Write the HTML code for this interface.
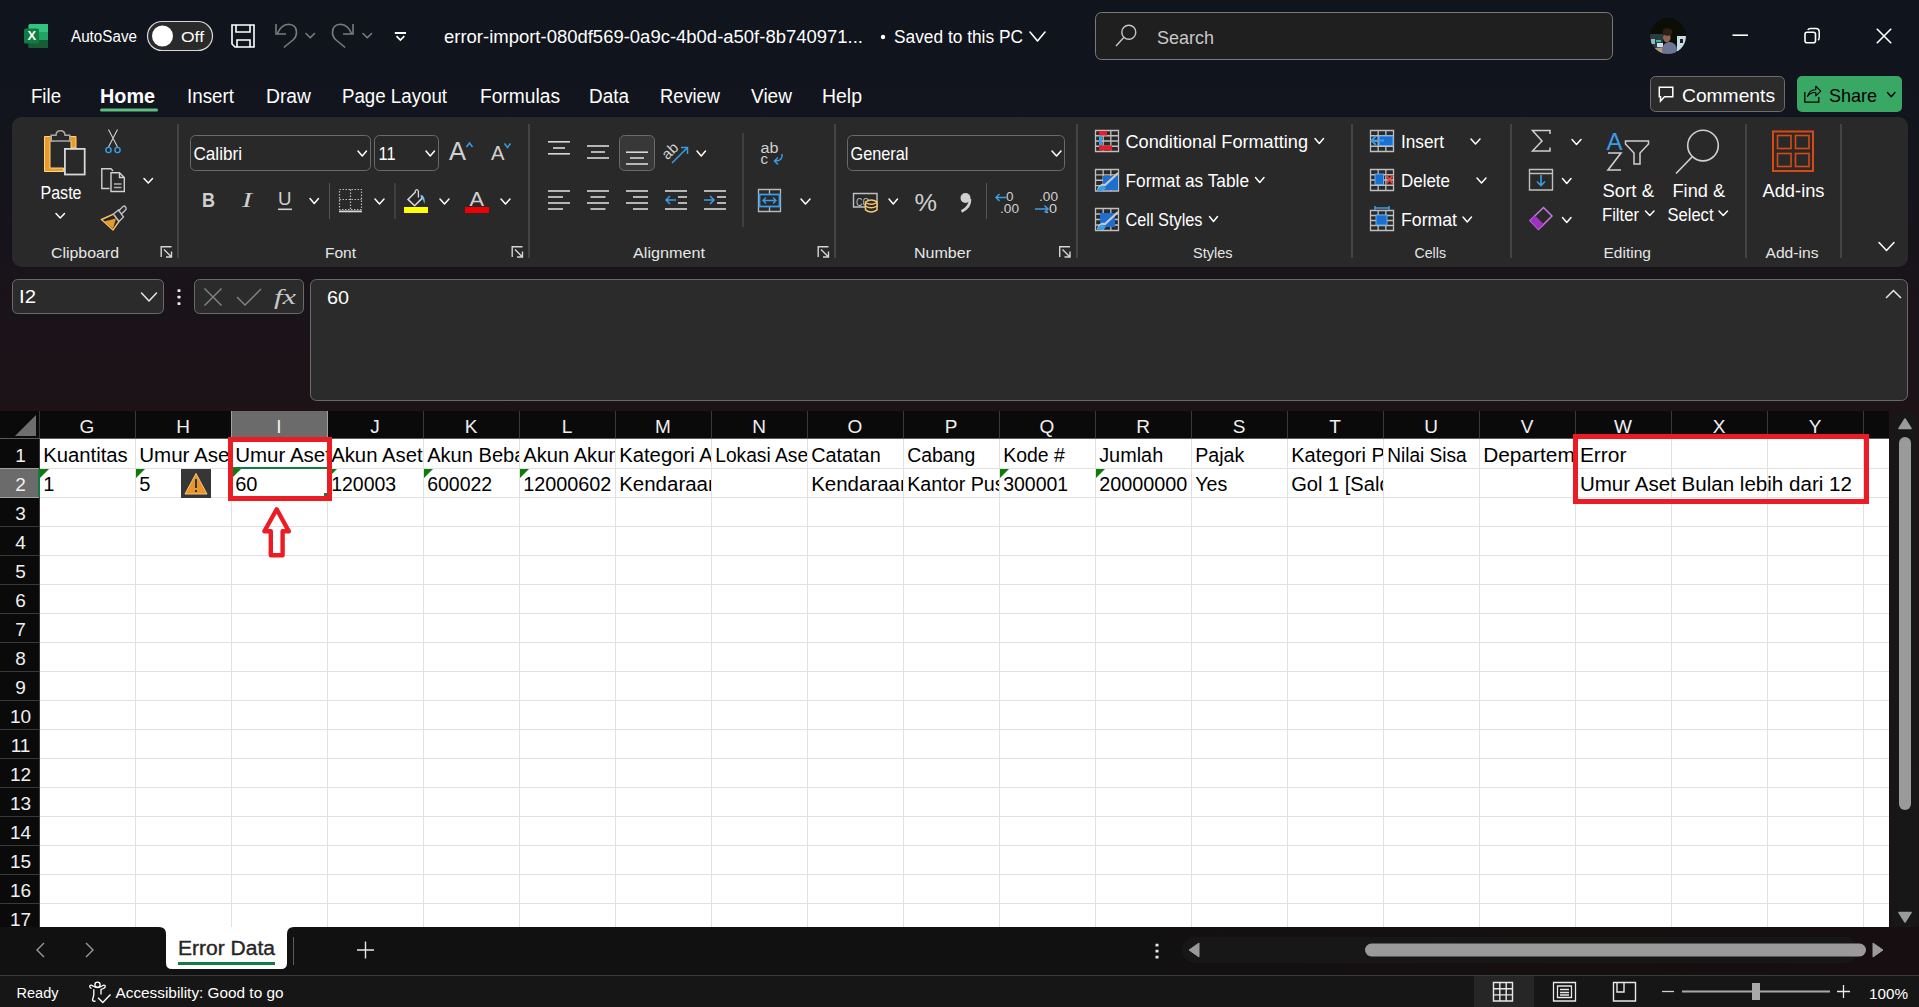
<!DOCTYPE html><html><head><meta charset="utf-8"><style>html,body{margin:0;padding:0;background:#10141c;overflow:hidden}svg{display:block}</style></head><body><svg width="1919" height="1007" viewBox="0 0 1919 1007" font-family="Liberation Sans"><defs><linearGradient id="bg" x1="0" y1="0" x2="0" y2="1"><stop offset="0" stop-color="#10141c"/><stop offset="0.11" stop-color="#12151d"/><stop offset="0.27" stop-color="#19131a"/><stop offset="0.42" stop-color="#1d1317"/><stop offset="1" stop-color="#1a1214"/></linearGradient></defs>
<rect x="0" y="0" width="1919" height="1007" rx="0" fill="url(#bg)" />
<g><rect x="28.5" y="24" width="19.5" height="24" rx="1.5" fill="#185c37"/><rect x="28.5" y="24" width="19.5" height="8" rx="1.5" fill="#33c481"/><rect x="28.5" y="32" width="19.5" height="8" fill="#21a366"/><rect x="38" y="24" width="10" height="8" fill="#33c481"/><rect x="28.5" y="40" width="19.5" height="8" fill="#185c37"/><rect x="24" y="28.5" width="15" height="15" rx="1.5" fill="#107c41"/></g>
<text x="27.4" y="40.4" font-size="13.2" fill="#ffffff" font-weight="700" text-anchor="start" font-family="Liberation Sans" textLength="8.6" lengthAdjust="spacingAndGlyphs" >X</text>
<text x="71" y="42" font-size="16" fill="#ffffff" font-weight="400" text-anchor="start" font-family="Liberation Sans" textLength="66" lengthAdjust="spacingAndGlyphs" >AutoSave</text>
<rect x="147.5" y="21.5" width="65" height="29" rx="14.5" fill="#2a2a2a" stroke="#d8d8d8" stroke-width="1.2" />
<circle cx="162.5" cy="36" r="10.5" fill="#ffffff"/>
<text x="181" y="42" font-size="15.5" fill="#ffffff" font-weight="400" text-anchor="start" font-family="Liberation Sans" textLength="23" lengthAdjust="spacingAndGlyphs" >Off</text>
<path d="M232 25 H254 V47 H235 L232 44 Z" fill="none" stroke="#ffffff" stroke-width="1.6" />
<path d="M236 25 V32 H250 V25" fill="none" stroke="#ffffff" stroke-width="1.6" />
<path d="M237 47 V40 H250 V47" fill="none" stroke="#ffffff" stroke-width="1.6" />
<path d="M276 24 V34 H286" fill="none" stroke="#7b7b7b" stroke-width="1.6" />
<path d="M277.3 33.8 Q281 24.5 288.5 24.2 Q296.5 24.5 296.5 32.5 Q296.5 36.5 293.5 39.5 L283.8 47.5" fill="none" stroke="#7b7b7b" stroke-width="1.6" />
<path d="M306 33.5 L310.25 37.8 L314.5 33.5" fill="none" stroke="#7b7b7b" stroke-width="1.6" stroke-linecap="round" stroke-linejoin="round"/>
<path d="M353 24 V34 H343" fill="none" stroke="#7b7b7b" stroke-width="1.6" />
<path d="M351.7 33.8 Q348 24.5 340.5 24.2 Q332.5 24.5 332.5 32.5 Q332.5 36.5 335.5 39.5 L345.2 47.5" fill="none" stroke="#7b7b7b" stroke-width="1.6" />
<path d="M363 33.5 L367.25 37.8 L371.5 33.5" fill="none" stroke="#7b7b7b" stroke-width="1.6" stroke-linecap="round" stroke-linejoin="round"/>
<path d="M394.8 33 H406" fill="none" stroke="#ffffff" stroke-width="2" />
<path d="M396.5 36.2 L400.4 40 L404.3 36.2" fill="none" stroke="#ffffff" stroke-width="1.7" />
<text x="444" y="43" font-size="17.5" fill="#ffffff" font-weight="400" text-anchor="start" font-family="Liberation Sans" textLength="419" lengthAdjust="spacingAndGlyphs" >error-import-080df569-0a9c-4b0d-a50f-8b740971...</text>
<circle cx="883" cy="37" r="2.2" fill="#ffffff"/>
<text x="894" y="43" font-size="17.5" fill="#ffffff" font-weight="400" text-anchor="start" font-family="Liberation Sans" textLength="129" lengthAdjust="spacingAndGlyphs" >Saved to this PC</text>
<path d="M1030 32 L1037.5 41 L1045 32" fill="none" stroke="#ffffff" stroke-width="1.6" stroke-linecap="round" stroke-linejoin="round"/>
<rect x="1095.5" y="12.5" width="517" height="47" rx="6" fill="#1f1f1f" stroke="#7a7a7a" stroke-width="1" />
<circle cx="1128.8" cy="32.3" r="7" fill="none" stroke="#c8c8c8" stroke-width="1.4"/>
<path d="M1116 46 L1123.8 37.5" fill="none" stroke="#c8c8c8" stroke-width="1.4" />
<text x="1157" y="44" font-size="19" fill="#c8c8c8" font-weight="400" text-anchor="start" font-family="Liberation Sans" textLength="57" lengthAdjust="spacingAndGlyphs" >Search</text>
<clipPath id="av"><circle cx="1668" cy="36" r="18"/></clipPath>
<g clip-path="url(#av)"><rect x="1650" y="18" width="36" height="36" fill="#0c0e06"/><rect x="1650" y="34" width="13" height="14" fill="#2a3a40"/><rect x="1651" y="39" width="4" height="5" fill="#8fb8c8"/><rect x="1656" y="40" width="5" height="2" fill="#30c090"/><rect x="1657" y="43" width="6" height="4" fill="#d0e0e8"/><rect x="1677" y="36" width="10" height="15" fill="#c8dde6"/><rect x="1680" y="39" width="3" height="4" fill="#202020"/><path d="M1655 48 L1666 47 L1663 55 L1654 55 Z" fill="#b09a84"/><ellipse cx="1669.5" cy="50" rx="7.5" ry="8" fill="#6c7694"/><ellipse cx="1666.8" cy="37.5" rx="3.8" ry="4.8" fill="#8c6252"/><ellipse cx="1667.5" cy="32" rx="5" ry="3.8" fill="#2c2014"/></g>
<path d="M1732.5 35.2 H1748" fill="none" stroke="#ffffff" stroke-width="1.6" />
<rect x="1805" y="32.3" width="10.5" height="10.5" rx="2" fill="none" stroke="#ffffff" stroke-width="1.6" />
<path d="M1807.8 29.8 Q1808.5 28.6 1810.5 28.6 H1816 Q1819.2 28.6 1819.2 31.8 V37.5 Q1819.2 39.4 1818 40.2" fill="none" stroke="#ffffff" stroke-width="1.5" />
<path d="M1876.8 28.8 L1891.2 43.2 M1891.2 28.8 L1876.8 43.2" fill="none" stroke="#ffffff" stroke-width="1.6" />
<text x="31" y="103" font-size="19.5" fill="#ffffff" font-weight="400" text-anchor="start" font-family="Liberation Sans" textLength="30" lengthAdjust="spacingAndGlyphs" >File</text>
<text x="100" y="103" font-size="19.5" fill="#ffffff" font-weight="700" text-anchor="start" font-family="Liberation Sans" textLength="55" lengthAdjust="spacingAndGlyphs" >Home</text>
<text x="187" y="103" font-size="19.5" fill="#ffffff" font-weight="400" text-anchor="start" font-family="Liberation Sans" textLength="47" lengthAdjust="spacingAndGlyphs" >Insert</text>
<text x="266" y="103" font-size="19.5" fill="#ffffff" font-weight="400" text-anchor="start" font-family="Liberation Sans" textLength="45" lengthAdjust="spacingAndGlyphs" >Draw</text>
<text x="342" y="103" font-size="19.5" fill="#ffffff" font-weight="400" text-anchor="start" font-family="Liberation Sans" textLength="105" lengthAdjust="spacingAndGlyphs" >Page Layout</text>
<text x="480" y="103" font-size="19.5" fill="#ffffff" font-weight="400" text-anchor="start" font-family="Liberation Sans" textLength="80" lengthAdjust="spacingAndGlyphs" >Formulas</text>
<text x="589" y="103" font-size="19.5" fill="#ffffff" font-weight="400" text-anchor="start" font-family="Liberation Sans" textLength="40" lengthAdjust="spacingAndGlyphs" >Data</text>
<text x="660" y="103" font-size="19.5" fill="#ffffff" font-weight="400" text-anchor="start" font-family="Liberation Sans" textLength="60" lengthAdjust="spacingAndGlyphs" >Review</text>
<text x="751" y="103" font-size="19.5" fill="#ffffff" font-weight="400" text-anchor="start" font-family="Liberation Sans" textLength="41" lengthAdjust="spacingAndGlyphs" >View</text>
<text x="822" y="103" font-size="19.5" fill="#ffffff" font-weight="400" text-anchor="start" font-family="Liberation Sans" textLength="40" lengthAdjust="spacingAndGlyphs" >Help</text>
<rect x="100" y="108.5" width="58" height="3" rx="1.5" fill="#5cbf7f" />
<rect x="1650.5" y="76.5" width="134" height="35" rx="5" fill="#2b2b2b" stroke="#6c6c6c" stroke-width="1" />
<path d="M1659.3 87.3 H1672.8 V96.7 H1664.5 L1660.5 101 V96.7 H1659.3 Z" fill="none" stroke="#ffffff" stroke-width="1.5" stroke-linejoin="miter"/>
<text x="1682" y="102" font-size="19" fill="#ffffff" font-weight="400" text-anchor="start" font-family="Liberation Sans" textLength="93" lengthAdjust="spacingAndGlyphs" >Comments</text>
<rect x="1797" y="76" width="105" height="36" rx="5" fill="#3aa865" />
<path d="M1804.8 92 V102.2 H1818.8 V97" fill="none" stroke="#000000" stroke-width="1.3" />
<path d="M1807.5 96.5 Q1809.5 89.5 1815.8 89.8 L1815.8 86.2 L1820.8 91.2 L1815.8 95.8 L1815.8 92.6 Q1810.5 92.2 1807.5 96.5 Z" fill="none" stroke="#000000" stroke-width="1.1" stroke-linejoin="round"/>
<text x="1829" y="102" font-size="19" fill="#000000" font-weight="400" text-anchor="start" font-family="Liberation Sans" textLength="48" lengthAdjust="spacingAndGlyphs" >Share</text>
<path d="M1887.5 92.5 L1891.25 96.7 L1895.0 92.5" fill="none" stroke="#000000" stroke-width="1.4" stroke-linecap="round" stroke-linejoin="round"/>
<rect x="11" y="116" width="1898" height="152" rx="10" fill="#141218" opacity="0.6"/>
<rect x="12" y="117" width="1896" height="150" rx="9" fill="#292929" />
<rect x="177.5" y="124" width="1" height="134" rx="0" fill="#606060" />
<rect x="528.5" y="124" width="1" height="134" rx="0" fill="#606060" />
<rect x="834.5" y="124" width="1" height="134" rx="0" fill="#606060" />
<rect x="1076.5" y="124" width="1" height="134" rx="0" fill="#606060" />
<rect x="1351.5" y="124" width="1" height="134" rx="0" fill="#606060" />
<rect x="1510.5" y="124" width="1" height="134" rx="0" fill="#606060" />
<rect x="1745.5" y="124" width="1" height="134" rx="0" fill="#606060" />
<rect x="1840.5" y="124" width="1" height="134" rx="0" fill="#606060" />
<text x="51" y="257.5" font-size="15" fill="#e6e6e6" font-weight="400" text-anchor="start" font-family="Liberation Sans" textLength="68" lengthAdjust="spacingAndGlyphs" >Clipboard</text>
<text x="325" y="257.5" font-size="15" fill="#e6e6e6" font-weight="400" text-anchor="start" font-family="Liberation Sans" textLength="31" lengthAdjust="spacingAndGlyphs" >Font</text>
<text x="633" y="257.5" font-size="15" fill="#e6e6e6" font-weight="400" text-anchor="start" font-family="Liberation Sans" textLength="72" lengthAdjust="spacingAndGlyphs" >Alignment</text>
<text x="914" y="257.5" font-size="15" fill="#e6e6e6" font-weight="400" text-anchor="start" font-family="Liberation Sans" textLength="57" lengthAdjust="spacingAndGlyphs" >Number</text>
<text x="1193" y="257.5" font-size="15" fill="#e6e6e6" font-weight="400" text-anchor="start" font-family="Liberation Sans" textLength="39.5" lengthAdjust="spacingAndGlyphs" >Styles</text>
<text x="1414.5" y="257.5" font-size="15" fill="#e6e6e6" font-weight="400" text-anchor="start" font-family="Liberation Sans" textLength="31.5" lengthAdjust="spacingAndGlyphs" >Cells</text>
<text x="1603.5" y="257.5" font-size="15" fill="#e6e6e6" font-weight="400" text-anchor="start" font-family="Liberation Sans" textLength="47.5" lengthAdjust="spacingAndGlyphs" >Editing</text>
<text x="1765.5" y="257.5" font-size="15" fill="#e6e6e6" font-weight="400" text-anchor="start" font-family="Liberation Sans" textLength="53" lengthAdjust="spacingAndGlyphs" >Add-ins</text>
<path d="M161.2 257 V246.7 H171.5" fill="none" stroke="#d4d4d4" stroke-width="1.4" />
<path d="M164.0 249.5 L171.5 257 M171.5 251.5 V257 H166.0" fill="none" stroke="#d4d4d4" stroke-width="1.4" />
<path d="M512.2 257 V246.7 H522.5" fill="none" stroke="#d4d4d4" stroke-width="1.4" />
<path d="M515.0 249.5 L522.5 257 M522.5 251.5 V257 H517.0" fill="none" stroke="#d4d4d4" stroke-width="1.4" />
<path d="M818.2 257 V246.7 H828.5" fill="none" stroke="#d4d4d4" stroke-width="1.4" />
<path d="M821.0 249.5 L828.5 257 M828.5 251.5 V257 H823.0" fill="none" stroke="#d4d4d4" stroke-width="1.4" />
<path d="M1059.7 257 V246.7 H1070" fill="none" stroke="#d4d4d4" stroke-width="1.4" />
<path d="M1062.5 249.5 L1070 257 M1070 251.5 V257 H1064.5" fill="none" stroke="#d4d4d4" stroke-width="1.4" />
<path d="M44.5 136.5 H53 V141 H50 V168 H63.5 V171.5 H44.5 Z" fill="#ec9c26" stroke="#f6d68e" stroke-width="1" />
<path d="M68.5 136.5 H76 V148 H71 V141 H68.5 Z" fill="#ec9c26" stroke="#f6d68e" stroke-width="1" />
<path d="M51.2 141 V135.3 H56 Q56.2 130.8 60.5 130.8 Q64.8 130.8 65 135.3 H69.8 V141 Z" fill="#292929" stroke="#a8a8a8" stroke-width="1.6" />
<rect x="64.9" y="148.9" width="19.8" height="25.6" rx="0" fill="#292929" stroke="#d8d8d8" stroke-width="1.8" />
<text x="40.5" y="199" font-size="18" fill="#ffffff" font-weight="400" text-anchor="start" font-family="Liberation Sans" textLength="41" lengthAdjust="spacingAndGlyphs" >Paste</text>
<path d="M56 213.5 L60.25 218.0 L64.5 213.5" fill="none" stroke="#ffffff" stroke-width="1.5" stroke-linecap="round" stroke-linejoin="round"/>
<path d="M108.5 129.5 L117.5 147 M117.5 129.5 L108.5 147" fill="none" stroke="#cfcfcf" stroke-width="1.1" />
<circle cx="108.5" cy="150" r="2.6" fill="none" stroke="#3a9de6" stroke-width="1.4"/><circle cx="117.5" cy="150" r="2.6" fill="none" stroke="#3a9de6" stroke-width="1.4"/>
<path d="M109.5 188.5 H101.8 V168.8 H111 L113 171" fill="none" stroke="#d0d0d0" stroke-width="1.4" />
<path d="M111 172.8 H119.5 L124.3 177.5 V191.5 H111 Z M119.5 172.8 V177.5 H124.3" fill="#292929" stroke="#d0d0d0" stroke-width="1.4" />
<path d="M114 184 H121.5 M114 187.5 H121.5" fill="none" stroke="#b0b0b0" stroke-width="1.3" />
<path d="M144 178.5 L148.25 183.0 L152.5 178.5" fill="none" stroke="#ffffff" stroke-width="1.5" stroke-linecap="round" stroke-linejoin="round"/>
<path d="M101.5 219.5 L113.5 214 L119 221.5 L113 230 Z" fill="#292929" stroke="#f5c86e" stroke-width="1.4" />
<path d="M104 221.5 L116 218.5 L113 228.5 Z" fill="#e89a2a" stroke="none" stroke-width="1.5" />
<path d="M113.5 214 L118.5 210 L123.5 217 L119 221.5 Z M118.5 211 L123 206.5 Q124.5 205.5 125.5 207 L126 208 Q126.5 209 125.5 210 L121 214.5" fill="#292929" stroke="#c0c0c0" stroke-width="1.4" />
<rect x="190.5" y="135.5" width="180" height="35" rx="5" fill="#292929" stroke="#6a6a6a" stroke-width="1" />
<text x="193.5" y="160" font-size="18.5" fill="#ffffff" font-weight="400" text-anchor="start" font-family="Liberation Sans" textLength="48.5" lengthAdjust="spacingAndGlyphs" >Calibri</text>
<path d="M358 151 L362.25 156 L366.5 151" fill="none" stroke="#ffffff" stroke-width="1.5" stroke-linecap="round" stroke-linejoin="round"/>
<rect x="374.5" y="135.5" width="64" height="35" rx="5" fill="#292929" stroke="#6a6a6a" stroke-width="1" />
<text x="378.5" y="160" font-size="18.5" fill="#ffffff" font-weight="400" text-anchor="start" font-family="Liberation Sans" textLength="17" lengthAdjust="spacingAndGlyphs" >11</text>
<path d="M426 151 L430.25 156 L434.5 151" fill="none" stroke="#ffffff" stroke-width="1.5" stroke-linecap="round" stroke-linejoin="round"/>
<text x="449" y="160.4" font-size="26" fill="#d0d0d0" font-weight="400" text-anchor="start" font-family="Liberation Sans" textLength="17" lengthAdjust="spacingAndGlyphs" >A</text>
<path d="M466.5 147 L469.5 143 L472.5 147" fill="none" stroke="#3a9de6" stroke-width="1.5" />
<text x="491" y="160.4" font-size="21" fill="#d0d0d0" font-weight="400" text-anchor="start" font-family="Liberation Sans" textLength="13.5" lengthAdjust="spacingAndGlyphs" >A</text>
<path d="M504.5 143.5 L507.5 147.5 L510.5 143.5" fill="none" stroke="#3a9de6" stroke-width="1.5" />
<text x="202" y="207" font-size="20.5" fill="#d0d0d0" font-weight="700" text-anchor="start" font-family="Liberation Sans" textLength="13" lengthAdjust="spacingAndGlyphs" >B</text>
<text x="242" y="207" font-size="21" fill="#d0d0d0" font-weight="400" text-anchor="start" font-family="Liberation Serif" textLength="10" lengthAdjust="spacingAndGlyphs" font-style="italic">I</text>
<text x="278" y="204.5" font-size="18" fill="#d0d0d0" font-weight="400" text-anchor="start" font-family="Liberation Sans" textLength="13.5" lengthAdjust="spacingAndGlyphs" >U</text>
<rect x="278" y="208.5" width="14" height="1.6" rx="0" fill="#d0d0d0" />
<path d="M310 198.5 L314.25 203.5 L318.5 198.5" fill="none" stroke="#ffffff" stroke-width="1.5" stroke-linecap="round" stroke-linejoin="round"/>
<rect x="329" y="183" width="1" height="36" rx="0" fill="#555555" />
<path d="M339.5 189.5 H361.5 V209.5 H339.5 Z M350.5 189.5 V209.5 M339.5 199.5 H361.5" fill="none" stroke="#b8b8b8" stroke-width="1.2" stroke-dasharray="1.5 1.5"/>
<rect x="339" y="210.5" width="23" height="1.8" rx="0" fill="#d8d8d8" />
<path d="M375 199 L379.5 204 L384 199" fill="none" stroke="#ffffff" stroke-width="1.5" stroke-linecap="round" stroke-linejoin="round"/>
<rect x="394.5" y="183" width="1" height="36" rx="0" fill="#555555" />
<path d="M415 192.5 L408 199.4 L414.6 205.8 L422 198.4" fill="none" stroke="#d8d8d8" stroke-width="1.5" />
<path d="M415.2 193 V191.2 Q416.8 188 418.4 191.2 V197.5" fill="none" stroke="#d8d8d8" stroke-width="1.3" />
<path d="M420.5 194.8 Q425.6 195.5 424.6 204 Q423.6 199.5 420.8 197.6 Z" fill="#7cc0f0" stroke="none" stroke-width="1.5" />
<rect x="404" y="207" width="24" height="6" rx="0" fill="#ffff00" />
<path d="M440 199 L444.5 204 L449 199" fill="none" stroke="#ffffff" stroke-width="1.5" stroke-linecap="round" stroke-linejoin="round"/>
<text x="469.5" y="205.5" font-size="19.5" fill="#d0d0d0" font-weight="400" text-anchor="start" font-family="Liberation Sans" textLength="14.5" lengthAdjust="spacingAndGlyphs" >A</text>
<rect x="465" y="207" width="24" height="6" rx="0" fill="#f00000" />
<path d="M501 199 L505.5 204 L510 199" fill="none" stroke="#ffffff" stroke-width="1.5" stroke-linecap="round" stroke-linejoin="round"/>
<rect x="548" y="141.0" width="22" height="1.6" rx="0" fill="#d8d8d8" />
<rect x="553" y="147.2" width="12" height="1.6" rx="0" fill="#d8d8d8" />
<rect x="548" y="153.0" width="22" height="1.6" rx="0" fill="#d8d8d8" />
<rect x="587" y="145.2" width="22" height="1.6" rx="0" fill="#d8d8d8" />
<rect x="591" y="151.2" width="14" height="1.6" rx="0" fill="#d8d8d8" />
<rect x="587" y="157.2" width="22" height="1.6" rx="0" fill="#d8d8d8" />
<rect x="619.5" y="135.5" width="35" height="35" rx="5" fill="#383838" stroke="#6a6a6a" stroke-width="1" />
<rect x="626" y="151.39999999999998" width="22" height="1.6" rx="0" fill="#d8d8d8" />
<rect x="630" y="157.2" width="14" height="1.6" rx="0" fill="#d8d8d8" />
<rect x="626" y="163.2" width="22" height="1.6" rx="0" fill="#d8d8d8" />
<text x="0" y="0" font-size="15" fill="#d0d0d0" font-family="Liberation Sans" transform="translate(667.5,160.5) rotate(-45)">ab</text>
<path d="M672 163 L687.5 147.5 M681 147.5 H687.5 V154" fill="none" stroke="#3a9de6" stroke-width="1.5" />
<path d="M697 151 L701.25 156 L705.5 151" fill="none" stroke="#ffffff" stroke-width="1.5" stroke-linecap="round" stroke-linejoin="round"/>
<rect x="742.5" y="133" width="1" height="94" rx="0" fill="#555555" />
<text x="760.5" y="153" font-size="14" fill="#d0d0d0" font-weight="400" text-anchor="start" font-family="Liberation Sans" textLength="18" lengthAdjust="spacingAndGlyphs" >ab</text>
<text x="760.5" y="164" font-size="14" fill="#d0d0d0" font-weight="400" text-anchor="start" font-family="Liberation Sans" textLength="7.5" lengthAdjust="spacingAndGlyphs" >c</text>
<path d="M782 154 Q783 161 775 161 M778 157.5 L774.5 161 L778 164.5" fill="none" stroke="#3a9de6" stroke-width="1.5" />
<rect x="548" y="190.2" width="22" height="1.6" rx="0" fill="#d8d8d8" />
<rect x="548" y="196.2" width="15" height="1.6" rx="0" fill="#d8d8d8" />
<rect x="548" y="202.2" width="22" height="1.6" rx="0" fill="#d8d8d8" />
<rect x="548" y="208.2" width="15" height="1.6" rx="0" fill="#d8d8d8" />
<rect x="587" y="190.2" width="22" height="1.6" rx="0" fill="#d8d8d8" />
<rect x="590.5" y="196.2" width="15.0" height="1.6" rx="0" fill="#d8d8d8" />
<rect x="587" y="202.2" width="22" height="1.6" rx="0" fill="#d8d8d8" />
<rect x="590.5" y="208.2" width="15.0" height="1.6" rx="0" fill="#d8d8d8" />
<rect x="626" y="190.2" width="22" height="1.6" rx="0" fill="#d8d8d8" />
<rect x="633" y="196.2" width="15" height="1.6" rx="0" fill="#d8d8d8" />
<rect x="626" y="202.2" width="22" height="1.6" rx="0" fill="#d8d8d8" />
<rect x="633" y="208.2" width="15" height="1.6" rx="0" fill="#d8d8d8" />
<rect x="665" y="190.2" width="22" height="1.6" rx="0" fill="#d8d8d8" />
<rect x="678" y="196.2" width="9" height="1.6" rx="0" fill="#d8d8d8" />
<rect x="678" y="202.2" width="9" height="1.6" rx="0" fill="#d8d8d8" />
<rect x="665" y="208.2" width="22" height="1.6" rx="0" fill="#d8d8d8" />
<path d="M666 200 H676 M670 196 L666 200 L670 204" fill="none" stroke="#3a9de6" stroke-width="1.5" />
<rect x="704" y="190.2" width="22" height="1.6" rx="0" fill="#d8d8d8" />
<rect x="717" y="196.2" width="9" height="1.6" rx="0" fill="#d8d8d8" />
<rect x="717" y="202.2" width="9" height="1.6" rx="0" fill="#d8d8d8" />
<rect x="704" y="208.2" width="22" height="1.6" rx="0" fill="#d8d8d8" />
<path d="M704 200 H714 M710 196 L714 200 L710 204" fill="none" stroke="#3a9de6" stroke-width="1.5" />
<path d="M758.5 189.5 H780.5 V211.5 H758.5 Z M769.5 189.5 V194 M769.5 207 V211.5" fill="none" stroke="#b8b8b8" stroke-width="1.3" />
<rect x="759.5" y="194.5" width="20" height="12" rx="0" fill="#292929" stroke="#3a9de6" stroke-width="1.8" />
<path d="M763 200.5 H776 M766 197.5 L763 200.5 L766 203.5 M773 197.5 L776 200.5 L773 203.5" fill="none" stroke="#3a9de6" stroke-width="1.4" />
<path d="M801 199 L805.5 204 L810 199" fill="none" stroke="#ffffff" stroke-width="1.5" stroke-linecap="round" stroke-linejoin="round"/>
<rect x="847.5" y="135.5" width="217" height="35" rx="5" fill="#292929" stroke="#6a6a6a" stroke-width="1" />
<text x="850.5" y="160" font-size="18.5" fill="#ffffff" font-weight="400" text-anchor="start" font-family="Liberation Sans" textLength="58" lengthAdjust="spacingAndGlyphs" >General</text>
<path d="M1052 151 L1056.5 156 L1061 151" fill="none" stroke="#ffffff" stroke-width="1.5" stroke-linecap="round" stroke-linejoin="round"/>
<path d="M853.5 193.5 H877 V207 H853.5 Z" fill="none" stroke="#c0c0c0" stroke-width="1.4" />
<text x="856" y="206" font-size="11" fill="#c0c0c0" font-weight="400" text-anchor="start" font-family="Liberation Sans" textLength="18" lengthAdjust="spacingAndGlyphs" >CCa</text>
<path d="M865.5 202 Q871.2 198.2 877 202 V209.8 Q871.2 214 865.5 209.8 Z" fill="#292929" stroke="#f5c86e" stroke-width="1.5" />
<path d="M865.5 202.5 Q871.2 206 877 202.5 M865.5 206 Q871.2 209.5 877 206" fill="none" stroke="#f5c86e" stroke-width="1.3" />
<path d="M889 199 L893.25 204 L897.5 199" fill="none" stroke="#ffffff" stroke-width="1.5" stroke-linecap="round" stroke-linejoin="round"/>
<text x="914.5" y="211" font-size="24" fill="#d0d0d0" font-weight="400" text-anchor="start" font-family="Liberation Sans" textLength="22.5" lengthAdjust="spacingAndGlyphs" >%</text>
<circle cx="965.5" cy="198" r="5" fill="#d0d0d0"/>
<path d="M970 199 Q970.5 207 961.5 211.5" fill="none" stroke="#d0d0d0" stroke-width="2.6" />
<rect x="986" y="183" width="1" height="36" rx="0" fill="#555555" />
<path d="M996 197.5 H1006 M999.5 194 L996 197.5 L999.5 201" fill="none" stroke="#3a9de6" stroke-width="1.5" />
<text x="1006" y="201" font-size="13" fill="#d0d0d0" font-weight="400" text-anchor="start" font-family="Liberation Sans" textLength="7.5" lengthAdjust="spacingAndGlyphs" >0</text>
<text x="1000" y="213" font-size="13" fill="#d0d0d0" font-weight="400" text-anchor="start" font-family="Liberation Sans" textLength="19" lengthAdjust="spacingAndGlyphs" >.00</text>
<text x="1039" y="201" font-size="13" fill="#d0d0d0" font-weight="400" text-anchor="start" font-family="Liberation Sans" textLength="19" lengthAdjust="spacingAndGlyphs" >.00</text>
<path d="M1035 209 H1048 M1044.5 205.5 L1048 209 L1044.5 212.5" fill="none" stroke="#3a9de6" stroke-width="1.5" />
<text x="1045" y="213" font-size="13" fill="#d0d0d0" font-weight="400" text-anchor="start" font-family="Liberation Sans" textLength="12" lengthAdjust="spacingAndGlyphs" >.0</text>
<path d="M1095.5 130.5 H1118.5 V151.5 H1095.5 Z M1103.1666666666667 130.5 V151.5 M1110.8333333333333 130.5 V151.5 M1095.5 135.75 H1118.5 M1095.5 141.0 H1118.5 M1095.5 146.25 H1118.5" fill="none" stroke="#c0c0c0" stroke-width="1.3" />
<rect x="1099" y="131" width="8" height="4.5" rx="0" fill="#e0202a" />
<rect x="1099" y="145.5" width="13" height="5" rx="0" fill="#e0202a" />
<rect x="1099" y="136" width="3" height="9" rx="0" fill="#3a9de6" />
<text x="1125.5" y="148" font-size="18" fill="#ffffff" font-weight="400" text-anchor="start" font-family="Liberation Sans" textLength="182.5" lengthAdjust="spacingAndGlyphs" >Conditional Formatting</text>
<path d="M1315 138.5 L1319.25 143.5 L1323.5 138.5" fill="none" stroke="#ffffff" stroke-width="1.5" stroke-linecap="round" stroke-linejoin="round"/>
<path d="M1095.5 169.5 H1118.5 V191.0 H1095.5 Z M1103.1666666666667 169.5 V191.0 M1110.8333333333333 169.5 V191.0 M1095.5 174.875 H1118.5 M1095.5 180.25 H1118.5 M1095.5 185.625 H1118.5" fill="none" stroke="#c0c0c0" stroke-width="1.3" />
<rect x="1103" y="176" width="15" height="14" rx="0" fill="#1a6fd0" />
<path d="M1098 190 Q1100 184 1105 185 L1118 173" fill="none" stroke="#c8c8c8" stroke-width="2.2" />
<path d="M1097 191 Q1099 185 1104 186 L1106 188 Q1103 192 1097 191Z" fill="#3a9de6" stroke="none" stroke-width="1.5" />
<text x="1125.5" y="187" font-size="18" fill="#ffffff" font-weight="400" text-anchor="start" font-family="Liberation Sans" textLength="123.5" lengthAdjust="spacingAndGlyphs" >Format as Table</text>
<path d="M1255.5 177.5 L1259.75 182.5 L1264.0 177.5" fill="none" stroke="#ffffff" stroke-width="1.5" stroke-linecap="round" stroke-linejoin="round"/>
<path d="M1095.5 208.5 H1118.5 V230.5 H1095.5 Z M1103.1666666666667 208.5 V230.5 M1110.8333333333333 208.5 V230.5 M1095.5 214.0 H1118.5 M1095.5 219.5 H1118.5 M1095.5 225.0 H1118.5" fill="none" stroke="#c0c0c0" stroke-width="1.3" />
<rect x="1100" y="213" width="15" height="14" rx="0" fill="#1a6fd0" />
<path d="M1098 229 Q1100 223 1105 224 L1118 212" fill="none" stroke="#c8c8c8" stroke-width="2.2" />
<path d="M1097 230 Q1099 224 1104 225 L1106 227 Q1103 231 1097 230Z" fill="#3a9de6" stroke="none" stroke-width="1.5" />
<text x="1125.5" y="226" font-size="18" fill="#ffffff" font-weight="400" text-anchor="start" font-family="Liberation Sans" textLength="77" lengthAdjust="spacingAndGlyphs" >Cell Styles</text>
<path d="M1209.5 216.5 L1213.5 221.5 L1217.5 216.5" fill="none" stroke="#ffffff" stroke-width="1.5" stroke-linecap="round" stroke-linejoin="round"/>
<path d="M1370.5 130.5 H1393.5 V151.5 H1370.5 Z M1378.1666666666667 130.5 V151.5 M1385.8333333333333 130.5 V151.5 M1370.5 135.75 H1393.5 M1370.5 141.0 H1393.5 M1370.5 146.25 H1393.5" fill="none" stroke="#c0c0c0" stroke-width="1.3" />
<rect x="1379" y="136" width="14" height="9.5" rx="0" fill="#1a6fd0" stroke="#5ab0f0" stroke-width="1" />
<path d="M1371 140.5 H1384 M1376 136 L1371.5 140.5 L1376 145" fill="none" stroke="#3a9de6" stroke-width="1.8" />
<text x="1401" y="148" font-size="18" fill="#ffffff" font-weight="400" text-anchor="start" font-family="Liberation Sans" textLength="43" lengthAdjust="spacingAndGlyphs" >Insert</text>
<path d="M1471 139 L1475.5 144 L1480 139" fill="none" stroke="#ffffff" stroke-width="1.5" stroke-linecap="round" stroke-linejoin="round"/>
<path d="M1370.5 169.5 H1393.5 V190.5 H1370.5 Z M1378.1666666666667 169.5 V190.5 M1385.8333333333333 169.5 V190.5 M1370.5 174.75 H1393.5 M1370.5 180.0 H1393.5 M1370.5 185.25 H1393.5" fill="none" stroke="#c0c0c0" stroke-width="1.3" />
<rect x="1375" y="174" width="8.5" height="10.5" rx="0" fill="#1a6fd0" stroke="#5ab0f0" stroke-width="1" />
<path d="M1386 175 L1393 184 M1393 175 L1386 184" fill="none" stroke="#f04040" stroke-width="1.8" />
<text x="1401" y="187" font-size="18" fill="#ffffff" font-weight="400" text-anchor="start" font-family="Liberation Sans" textLength="49" lengthAdjust="spacingAndGlyphs" >Delete</text>
<path d="M1477 178 L1481.5 183 L1486 178" fill="none" stroke="#ffffff" stroke-width="1.5" stroke-linecap="round" stroke-linejoin="round"/>
<path d="M1370.5 210.5 H1393.5 V230.5 H1370.5 Z M1378.1666666666667 210.5 V230.5 M1385.8333333333333 210.5 V230.5 M1370.5 215.5 H1393.5 M1370.5 220.5 H1393.5 M1370.5 225.5 H1393.5" fill="none" stroke="#c0c0c0" stroke-width="1.3" />
<rect x="1376" y="215" width="11" height="10" rx="0" fill="#1a6fd0" stroke="#5ab0f0" stroke-width="1" />
<path d="M1375 208 H1389 M1375 206 V210 M1389 206 V210" fill="none" stroke="#3a9de6" stroke-width="1.5" />
<text x="1401" y="226" font-size="18" fill="#ffffff" font-weight="400" text-anchor="start" font-family="Liberation Sans" textLength="56" lengthAdjust="spacingAndGlyphs" >Format</text>
<path d="M1463 217 L1467.25 222 L1471.5 217" fill="none" stroke="#ffffff" stroke-width="1.5" stroke-linecap="round" stroke-linejoin="round"/>
<path d="M1550 134 V130.5 H1532.5 L1542 141 L1532.5 151 H1550 V147.5" fill="none" stroke="#d0d0d0" stroke-width="1.5" />
<path d="M1572 139.5 L1576.5 144.5 L1581 139.5" fill="none" stroke="#ffffff" stroke-width="1.5" stroke-linecap="round" stroke-linejoin="round"/>
<path d="M1529.5 169.5 H1552.5 V190 H1529.5 Z M1529.5 173.5 H1552.5" fill="none" stroke="#c0c0c0" stroke-width="1.4" />
<path d="M1541 175 V185.5 M1537 181.5 L1541 185.5 L1545 181.5" fill="none" stroke="#3a9de6" stroke-width="1.6" />
<path d="M1562.5 178.5 L1566.75 183.5 L1571.0 178.5" fill="none" stroke="#ffffff" stroke-width="1.5" stroke-linecap="round" stroke-linejoin="round"/>
<path d="M1530 220.5 L1543.5 207.5 L1552 216 L1538.5 229.5 Z" fill="#292929" stroke="#c878e8" stroke-width="1.5" />
<path d="M1530 220.5 L1535 215.5 L1543.5 224 L1538.5 229.5 Z" fill="#a030c0" stroke="none" stroke-width="1.5" />
<path d="M1562.5 217.5 L1566.75 222.5 L1571.0 217.5" fill="none" stroke="#ffffff" stroke-width="1.5" stroke-linecap="round" stroke-linejoin="round"/>
<text x="1606.5" y="149.5" font-size="24" fill="#3a9de6" font-weight="400" text-anchor="start" font-family="Liberation Sans" textLength="16" lengthAdjust="spacingAndGlyphs" >A</text>
<path d="M1608 153 H1621 L1608 170 H1621" fill="none" stroke="#d0d0d0" stroke-width="1.6" />
<path d="M1625.5 141 H1648.5 V144 L1640 153 V164 H1634 V153 L1625.5 144 Z" fill="none" stroke="#d0d0d0" stroke-width="1.5" />
<text x="1602.5" y="197" font-size="18" fill="#ffffff" font-weight="400" text-anchor="start" font-family="Liberation Sans" textLength="51.5" lengthAdjust="spacingAndGlyphs" >Sort &amp;</text>
<text x="1602" y="221" font-size="18" fill="#ffffff" font-weight="400" text-anchor="start" font-family="Liberation Sans" textLength="37" lengthAdjust="spacingAndGlyphs" >Filter</text>
<path d="M1645.5 211 L1649.75 215.5 L1654.0 211" fill="none" stroke="#ffffff" stroke-width="1.5" stroke-linecap="round" stroke-linejoin="round"/>
<circle cx="1703" cy="145.6" r="15.3" fill="none" stroke="#d0d0d0" stroke-width="1.6"/>
<path d="M1692 157 L1676 173.5" fill="none" stroke="#d0d0d0" stroke-width="1.6" />
<text x="1672.5" y="197" font-size="18" fill="#ffffff" font-weight="400" text-anchor="start" font-family="Liberation Sans" textLength="52.5" lengthAdjust="spacingAndGlyphs" >Find &amp;</text>
<text x="1667.5" y="221" font-size="18" fill="#ffffff" font-weight="400" text-anchor="start" font-family="Liberation Sans" textLength="46" lengthAdjust="spacingAndGlyphs" >Select</text>
<path d="M1719 211 L1723.25 215.5 L1727.5 211" fill="none" stroke="#ffffff" stroke-width="1.5" stroke-linecap="round" stroke-linejoin="round"/>
<rect x="1773" y="131.5" width="40" height="39.5" rx="0" fill="none" stroke="#d84a14" stroke-width="2" />
<rect x="1777.5" y="135.5" width="13.5" height="13" rx="0" fill="none" stroke="#d84a14" stroke-width="1.6" />
<rect x="1795.5" y="135.5" width="13.5" height="13" rx="0" fill="none" stroke="#d84a14" stroke-width="1.6" />
<rect x="1777.5" y="153.5" width="13.5" height="13" rx="0" fill="none" stroke="#d84a14" stroke-width="1.6" />
<rect x="1795.5" y="153.5" width="13.5" height="13" rx="0" fill="none" stroke="#d84a14" stroke-width="1.6" />
<text x="1762.5" y="197" font-size="18" fill="#ffffff" font-weight="400" text-anchor="start" font-family="Liberation Sans" textLength="62" lengthAdjust="spacingAndGlyphs" >Add-ins</text>
<path d="M1879 242.5 L1886.5 250.5 L1894 242.5" fill="none" stroke="#ffffff" stroke-width="1.5" stroke-linecap="round" stroke-linejoin="round"/>
<rect x="12.5" y="279.5" width="151" height="34" rx="5" fill="#2b2b2b" stroke="#6a6a6a" stroke-width="1" />
<text x="19" y="303" font-size="18" fill="#ffffff" font-weight="400" text-anchor="start" font-family="Liberation Sans" textLength="17" lengthAdjust="spacingAndGlyphs" >I2</text>
<path d="M141.5 293 L149.0 301 L156.5 293" fill="none" stroke="#e8e8e8" stroke-width="1.5" stroke-linecap="round" stroke-linejoin="round"/>
<rect x="177.5" y="289.25" width="3" height="2.7" rx="0.6" fill="#e8e8e8" />
<rect x="177.5" y="295.75" width="3" height="2.7" rx="0.6" fill="#e8e8e8" />
<rect x="177.5" y="302.25" width="3" height="2.7" rx="0.6" fill="#e8e8e8" />
<rect x="194.5" y="279.5" width="109" height="34" rx="5" fill="#2b2b2b" stroke="#6a6a6a" stroke-width="1" />
<path d="M204.5 288.5 L221.5 305.5 M221.5 288.5 L204.5 305.5" fill="none" stroke="#858585" stroke-width="1.4" />
<path d="M237 297 L245 305 L261 289" fill="none" stroke="#858585" stroke-width="1.4" />
<text x="274" y="304" font-size="21" fill="#c8c8c8" font-weight="400" text-anchor="start" font-family="Liberation Serif" textLength="22" lengthAdjust="spacingAndGlyphs" font-style="italic">fx</text>
<rect x="310.5" y="279.5" width="1597" height="121" rx="6" fill="#2b2b2b" stroke="#6a6a6a" stroke-width="1" />
<text x="327" y="304" font-size="19" fill="#ffffff" font-weight="400" text-anchor="start" font-family="Liberation Sans" textLength="22" lengthAdjust="spacingAndGlyphs" >60</text>
<path d="M1886 298 L1893.5 290.5 L1901 298" fill="none" stroke="#e8e8e8" stroke-width="1.5" />
<rect x="0" y="411" width="1889" height="28" rx="0" fill="#0a0a0a" />
<rect x="0" y="439" width="39" height="488" rx="0" fill="#0a0a0a" />
<rect x="39" y="439" width="1850" height="488" rx="0" fill="#ffffff" />
<rect x="39" y="468" width="1850" height="1" rx="0" fill="#e1e1e1" />
<rect x="0" y="468" width="39" height="1" rx="0" fill="#3a3a3a" />
<rect x="39" y="497" width="1850" height="1" rx="0" fill="#e1e1e1" />
<rect x="0" y="497" width="39" height="1" rx="0" fill="#3a3a3a" />
<rect x="39" y="526" width="1850" height="1" rx="0" fill="#e1e1e1" />
<rect x="0" y="526" width="39" height="1" rx="0" fill="#3a3a3a" />
<rect x="39" y="555" width="1850" height="1" rx="0" fill="#e1e1e1" />
<rect x="0" y="555" width="39" height="1" rx="0" fill="#3a3a3a" />
<rect x="39" y="584" width="1850" height="1" rx="0" fill="#e1e1e1" />
<rect x="0" y="584" width="39" height="1" rx="0" fill="#3a3a3a" />
<rect x="39" y="613" width="1850" height="1" rx="0" fill="#e1e1e1" />
<rect x="0" y="613" width="39" height="1" rx="0" fill="#3a3a3a" />
<rect x="39" y="642" width="1850" height="1" rx="0" fill="#e1e1e1" />
<rect x="0" y="642" width="39" height="1" rx="0" fill="#3a3a3a" />
<rect x="39" y="671" width="1850" height="1" rx="0" fill="#e1e1e1" />
<rect x="0" y="671" width="39" height="1" rx="0" fill="#3a3a3a" />
<rect x="39" y="700" width="1850" height="1" rx="0" fill="#e1e1e1" />
<rect x="0" y="700" width="39" height="1" rx="0" fill="#3a3a3a" />
<rect x="39" y="729" width="1850" height="1" rx="0" fill="#e1e1e1" />
<rect x="0" y="729" width="39" height="1" rx="0" fill="#3a3a3a" />
<rect x="39" y="758" width="1850" height="1" rx="0" fill="#e1e1e1" />
<rect x="0" y="758" width="39" height="1" rx="0" fill="#3a3a3a" />
<rect x="39" y="787" width="1850" height="1" rx="0" fill="#e1e1e1" />
<rect x="0" y="787" width="39" height="1" rx="0" fill="#3a3a3a" />
<rect x="39" y="816" width="1850" height="1" rx="0" fill="#e1e1e1" />
<rect x="0" y="816" width="39" height="1" rx="0" fill="#3a3a3a" />
<rect x="39" y="845" width="1850" height="1" rx="0" fill="#e1e1e1" />
<rect x="0" y="845" width="39" height="1" rx="0" fill="#3a3a3a" />
<rect x="39" y="874" width="1850" height="1" rx="0" fill="#e1e1e1" />
<rect x="0" y="874" width="39" height="1" rx="0" fill="#3a3a3a" />
<rect x="39" y="903" width="1850" height="1" rx="0" fill="#e1e1e1" />
<rect x="0" y="903" width="39" height="1" rx="0" fill="#3a3a3a" />
<rect x="135" y="439" width="1" height="488" rx="0" fill="#e1e1e1" />
<rect x="135" y="411" width="1" height="28" rx="0" fill="#3a3a3a" />
<rect x="231" y="439" width="1" height="488" rx="0" fill="#e1e1e1" />
<rect x="231" y="411" width="1" height="28" rx="0" fill="#3a3a3a" />
<rect x="327" y="439" width="1" height="488" rx="0" fill="#e1e1e1" />
<rect x="327" y="411" width="1" height="28" rx="0" fill="#3a3a3a" />
<rect x="423" y="439" width="1" height="488" rx="0" fill="#e1e1e1" />
<rect x="423" y="411" width="1" height="28" rx="0" fill="#3a3a3a" />
<rect x="519" y="439" width="1" height="488" rx="0" fill="#e1e1e1" />
<rect x="519" y="411" width="1" height="28" rx="0" fill="#3a3a3a" />
<rect x="615" y="439" width="1" height="488" rx="0" fill="#e1e1e1" />
<rect x="615" y="411" width="1" height="28" rx="0" fill="#3a3a3a" />
<rect x="711" y="439" width="1" height="488" rx="0" fill="#e1e1e1" />
<rect x="711" y="411" width="1" height="28" rx="0" fill="#3a3a3a" />
<rect x="807" y="439" width="1" height="488" rx="0" fill="#e1e1e1" />
<rect x="807" y="411" width="1" height="28" rx="0" fill="#3a3a3a" />
<rect x="903" y="439" width="1" height="488" rx="0" fill="#e1e1e1" />
<rect x="903" y="411" width="1" height="28" rx="0" fill="#3a3a3a" />
<rect x="999" y="439" width="1" height="488" rx="0" fill="#e1e1e1" />
<rect x="999" y="411" width="1" height="28" rx="0" fill="#3a3a3a" />
<rect x="1095" y="439" width="1" height="488" rx="0" fill="#e1e1e1" />
<rect x="1095" y="411" width="1" height="28" rx="0" fill="#3a3a3a" />
<rect x="1191" y="439" width="1" height="488" rx="0" fill="#e1e1e1" />
<rect x="1191" y="411" width="1" height="28" rx="0" fill="#3a3a3a" />
<rect x="1287" y="439" width="1" height="488" rx="0" fill="#e1e1e1" />
<rect x="1287" y="411" width="1" height="28" rx="0" fill="#3a3a3a" />
<rect x="1383" y="439" width="1" height="488" rx="0" fill="#e1e1e1" />
<rect x="1383" y="411" width="1" height="28" rx="0" fill="#3a3a3a" />
<rect x="1479" y="439" width="1" height="488" rx="0" fill="#e1e1e1" />
<rect x="1479" y="411" width="1" height="28" rx="0" fill="#3a3a3a" />
<rect x="1575" y="439" width="1" height="488" rx="0" fill="#e1e1e1" />
<rect x="1575" y="411" width="1" height="28" rx="0" fill="#3a3a3a" />
<rect x="1671" y="439" width="1" height="488" rx="0" fill="#e1e1e1" />
<rect x="1671" y="411" width="1" height="28" rx="0" fill="#3a3a3a" />
<rect x="1767" y="439" width="1" height="488" rx="0" fill="#e1e1e1" />
<rect x="1767" y="411" width="1" height="28" rx="0" fill="#3a3a3a" />
<rect x="1863" y="439" width="1" height="488" rx="0" fill="#e1e1e1" />
<rect x="1863" y="411" width="1" height="28" rx="0" fill="#3a3a3a" />
<rect x="39" y="411" width="1" height="516" rx="0" fill="#3a3a3a" />
<rect x="0" y="438" width="1889" height="1" rx="0" fill="#5a5a5a" />
<rect x="231" y="411" width="96" height="28" rx="0" fill="#6b6b6b" />
<rect x="0" y="468" width="39" height="29" rx="0" fill="#6b6b6b" />
<rect x="0" y="468" width="39" height="1" rx="0" fill="#a0a0a0" />
<rect x="0" y="497" width="39" height="1" rx="0" fill="#a0a0a0" />
<rect x="231" y="411" width="1" height="28" rx="0" fill="#a0a0a0" />
<rect x="327" y="411" width="1" height="28" rx="0" fill="#a0a0a0" />
<text x="87" y="433" font-size="19" fill="#f0f0f0" font-weight="400" text-anchor="middle" font-family="Liberation Sans" >G</text>
<text x="183" y="433" font-size="19" fill="#f0f0f0" font-weight="400" text-anchor="middle" font-family="Liberation Sans" >H</text>
<text x="279" y="433" font-size="19" fill="#f0f0f0" font-weight="400" text-anchor="middle" font-family="Liberation Sans" >I</text>
<text x="375" y="433" font-size="19" fill="#f0f0f0" font-weight="400" text-anchor="middle" font-family="Liberation Sans" >J</text>
<text x="471" y="433" font-size="19" fill="#f0f0f0" font-weight="400" text-anchor="middle" font-family="Liberation Sans" >K</text>
<text x="567" y="433" font-size="19" fill="#f0f0f0" font-weight="400" text-anchor="middle" font-family="Liberation Sans" >L</text>
<text x="663" y="433" font-size="19" fill="#f0f0f0" font-weight="400" text-anchor="middle" font-family="Liberation Sans" >M</text>
<text x="759" y="433" font-size="19" fill="#f0f0f0" font-weight="400" text-anchor="middle" font-family="Liberation Sans" >N</text>
<text x="855" y="433" font-size="19" fill="#f0f0f0" font-weight="400" text-anchor="middle" font-family="Liberation Sans" >O</text>
<text x="951" y="433" font-size="19" fill="#f0f0f0" font-weight="400" text-anchor="middle" font-family="Liberation Sans" >P</text>
<text x="1047" y="433" font-size="19" fill="#f0f0f0" font-weight="400" text-anchor="middle" font-family="Liberation Sans" >Q</text>
<text x="1143" y="433" font-size="19" fill="#f0f0f0" font-weight="400" text-anchor="middle" font-family="Liberation Sans" >R</text>
<text x="1239" y="433" font-size="19" fill="#f0f0f0" font-weight="400" text-anchor="middle" font-family="Liberation Sans" >S</text>
<text x="1335" y="433" font-size="19" fill="#f0f0f0" font-weight="400" text-anchor="middle" font-family="Liberation Sans" >T</text>
<text x="1431" y="433" font-size="19" fill="#f0f0f0" font-weight="400" text-anchor="middle" font-family="Liberation Sans" >U</text>
<text x="1527" y="433" font-size="19" fill="#f0f0f0" font-weight="400" text-anchor="middle" font-family="Liberation Sans" >V</text>
<text x="1623" y="433" font-size="19" fill="#f0f0f0" font-weight="400" text-anchor="middle" font-family="Liberation Sans" >W</text>
<text x="1719" y="433" font-size="19" fill="#f0f0f0" font-weight="400" text-anchor="middle" font-family="Liberation Sans" >X</text>
<text x="1815" y="433" font-size="19" fill="#f0f0f0" font-weight="400" text-anchor="middle" font-family="Liberation Sans" >Y</text>
<text x="20.5" y="462" font-size="19" fill="#f0f0f0" font-weight="400" text-anchor="middle" font-family="Liberation Sans" >1</text>
<text x="20.5" y="491" font-size="19" fill="#f0f0f0" font-weight="400" text-anchor="middle" font-family="Liberation Sans" >2</text>
<text x="20.5" y="520" font-size="19" fill="#f0f0f0" font-weight="400" text-anchor="middle" font-family="Liberation Sans" >3</text>
<text x="20.5" y="549" font-size="19" fill="#f0f0f0" font-weight="400" text-anchor="middle" font-family="Liberation Sans" >4</text>
<text x="20.5" y="578" font-size="19" fill="#f0f0f0" font-weight="400" text-anchor="middle" font-family="Liberation Sans" >5</text>
<text x="20.5" y="607" font-size="19" fill="#f0f0f0" font-weight="400" text-anchor="middle" font-family="Liberation Sans" >6</text>
<text x="20.5" y="636" font-size="19" fill="#f0f0f0" font-weight="400" text-anchor="middle" font-family="Liberation Sans" >7</text>
<text x="20.5" y="665" font-size="19" fill="#f0f0f0" font-weight="400" text-anchor="middle" font-family="Liberation Sans" >8</text>
<text x="20.5" y="694" font-size="19" fill="#f0f0f0" font-weight="400" text-anchor="middle" font-family="Liberation Sans" >9</text>
<text x="20.5" y="723" font-size="19" fill="#f0f0f0" font-weight="400" text-anchor="middle" font-family="Liberation Sans" >10</text>
<text x="20.5" y="752" font-size="19" fill="#f0f0f0" font-weight="400" text-anchor="middle" font-family="Liberation Sans" >11</text>
<text x="20.5" y="781" font-size="19" fill="#f0f0f0" font-weight="400" text-anchor="middle" font-family="Liberation Sans" >12</text>
<text x="20.5" y="810" font-size="19" fill="#f0f0f0" font-weight="400" text-anchor="middle" font-family="Liberation Sans" >13</text>
<text x="20.5" y="839" font-size="19" fill="#f0f0f0" font-weight="400" text-anchor="middle" font-family="Liberation Sans" >14</text>
<text x="20.5" y="868" font-size="19" fill="#f0f0f0" font-weight="400" text-anchor="middle" font-family="Liberation Sans" >15</text>
<text x="20.5" y="897" font-size="19" fill="#f0f0f0" font-weight="400" text-anchor="middle" font-family="Liberation Sans" >16</text>
<text x="20.5" y="926" font-size="19" fill="#f0f0f0" font-weight="400" text-anchor="middle" font-family="Liberation Sans" >17</text>
<path d="M15 436 L36 415 L36 436 Z" fill="#6e6e6e" stroke="none" stroke-width="1.5" />
<svg x="39" y="439" width="96" height="29" overflow="hidden"><text x="4.2" y="23" font-size="19.5" fill="#000000" font-family="Liberation Sans" textLength="84.5" lengthAdjust="spacingAndGlyphs">Kuantitas</text></svg>
<svg x="135" y="439" width="96" height="29" overflow="hidden"><text x="4.2" y="23" font-size="19.5" fill="#000000" font-family="Liberation Sans" textLength="157.4" lengthAdjust="spacingAndGlyphs">Umur Aset Tahun</text></svg>
<svg x="231" y="439" width="96" height="29" overflow="hidden"><text x="4.2" y="23" font-size="19.5" fill="#000000" font-family="Liberation Sans" textLength="154.0" lengthAdjust="spacingAndGlyphs">Umur Aset Bulan</text></svg>
<svg x="327" y="439" width="96" height="29" overflow="hidden"><text x="4.2" y="23" font-size="19.5" fill="#000000" font-family="Liberation Sans" textLength="146.3" lengthAdjust="spacingAndGlyphs">Akun Aset Tetap</text></svg>
<svg x="423" y="439" width="96" height="29" overflow="hidden"><text x="4.2" y="23" font-size="19.5" fill="#000000" font-family="Liberation Sans" textLength="221.1" lengthAdjust="spacingAndGlyphs">Akun Beban Penyusutan</text></svg>
<svg x="519" y="439" width="96" height="29" overflow="hidden"><text x="4.2" y="23" font-size="19.5" fill="#000000" font-family="Liberation Sans" textLength="255.7" lengthAdjust="spacingAndGlyphs">Akun Akumulasi Penyusutan</text></svg>
<svg x="615" y="439" width="96" height="29" overflow="hidden"><text x="4.2" y="23" font-size="19.5" fill="#000000" font-family="Liberation Sans" textLength="120.6" lengthAdjust="spacingAndGlyphs">Kategori Aset</text></svg>
<svg x="711" y="439" width="96" height="29" overflow="hidden"><text x="4.2" y="23" font-size="19.5" fill="#000000" font-family="Liberation Sans" textLength="98.3" lengthAdjust="spacingAndGlyphs">Lokasi Aset</text></svg>
<svg x="807" y="439" width="96" height="29" overflow="hidden"><text x="4.2" y="23" font-size="19.5" fill="#000000" font-family="Liberation Sans" textLength="69.5" lengthAdjust="spacingAndGlyphs">Catatan</text></svg>
<svg x="903" y="439" width="96" height="29" overflow="hidden"><text x="4.2" y="23" font-size="19.5" fill="#000000" font-family="Liberation Sans" textLength="68" lengthAdjust="spacingAndGlyphs">Cabang</text></svg>
<svg x="999" y="439" width="96" height="29" overflow="hidden"><text x="4.2" y="23" font-size="19.5" fill="#000000" font-family="Liberation Sans" textLength="61.5" lengthAdjust="spacingAndGlyphs">Kode #</text></svg>
<svg x="1095" y="439" width="96" height="29" overflow="hidden"><text x="4.2" y="23" font-size="19.5" fill="#000000" font-family="Liberation Sans" textLength="64" lengthAdjust="spacingAndGlyphs">Jumlah</text></svg>
<svg x="1191" y="439" width="96" height="29" overflow="hidden"><text x="4.2" y="23" font-size="19.5" fill="#000000" font-family="Liberation Sans" textLength="49" lengthAdjust="spacingAndGlyphs">Pajak</text></svg>
<svg x="1287" y="439" width="96" height="29" overflow="hidden"><text x="4.2" y="23" font-size="19.5" fill="#000000" font-family="Liberation Sans" textLength="130.6" lengthAdjust="spacingAndGlyphs">Kategori Pajak</text></svg>
<svg x="1383" y="439" width="96" height="29" overflow="hidden"><text x="4.2" y="23" font-size="19.5" fill="#000000" font-family="Liberation Sans" textLength="79.5" lengthAdjust="spacingAndGlyphs">Nilai Sisa</text></svg>
<svg x="1479" y="439" width="96" height="29" overflow="hidden"><text x="4.2" y="23" font-size="19.5" fill="#000000" font-family="Liberation Sans" textLength="114.8" lengthAdjust="spacingAndGlyphs">Departemen</text></svg>
<svg x="1575" y="439" width="96" height="29" overflow="hidden"><text x="4.9" y="23" font-size="19.5" fill="#000000" font-family="Liberation Sans" textLength="46.6" lengthAdjust="spacingAndGlyphs">Error</text></svg>
<svg x="39" y="468" width="96" height="29" overflow="hidden"><text x="4.2" y="23" font-size="19.5" fill="#000000" font-family="Liberation Sans" textLength="11.2" lengthAdjust="spacingAndGlyphs">1</text></svg>
<svg x="135" y="468" width="96" height="29" overflow="hidden"><text x="4.2" y="23" font-size="19.5" fill="#000000" font-family="Liberation Sans" textLength="11.2" lengthAdjust="spacingAndGlyphs">5</text></svg>
<svg x="231" y="468" width="96" height="29" overflow="hidden"><text x="4.2" y="23" font-size="19.5" fill="#000000" font-family="Liberation Sans" textLength="22.3" lengthAdjust="spacingAndGlyphs">60</text></svg>
<svg x="327" y="468" width="96" height="29" overflow="hidden"><text x="4.2" y="23" font-size="19.5" fill="#000000" font-family="Liberation Sans" textLength="65" lengthAdjust="spacingAndGlyphs">120003</text></svg>
<svg x="423" y="468" width="96" height="29" overflow="hidden"><text x="4.2" y="23" font-size="19.5" fill="#000000" font-family="Liberation Sans" textLength="65" lengthAdjust="spacingAndGlyphs">600022</text></svg>
<svg x="519" y="468" width="96" height="29" overflow="hidden"><text x="4.2" y="23" font-size="19.5" fill="#000000" font-family="Liberation Sans" textLength="88" lengthAdjust="spacingAndGlyphs">12000602</text></svg>
<svg x="615" y="468" width="96" height="29" overflow="hidden"><text x="4.2" y="23" font-size="19.5" fill="#000000" font-family="Liberation Sans" textLength="100.2" lengthAdjust="spacingAndGlyphs">Kendaraan</text></svg>
<svg x="807" y="468" width="96" height="29" overflow="hidden"><text x="4.2" y="23" font-size="19.5" fill="#000000" font-family="Liberation Sans" textLength="100.2" lengthAdjust="spacingAndGlyphs">Kendaraan</text></svg>
<svg x="903" y="468" width="96" height="29" overflow="hidden"><text x="4.2" y="23" font-size="19.5" fill="#000000" font-family="Liberation Sans" textLength="113.9" lengthAdjust="spacingAndGlyphs">Kantor Pusat</text></svg>
<svg x="999" y="468" width="96" height="29" overflow="hidden"><text x="4.2" y="23" font-size="19.5" fill="#000000" font-family="Liberation Sans" textLength="65" lengthAdjust="spacingAndGlyphs">300001</text></svg>
<svg x="1095" y="468" width="96" height="29" overflow="hidden"><text x="4.2" y="23" font-size="19.5" fill="#000000" font-family="Liberation Sans" textLength="88" lengthAdjust="spacingAndGlyphs">20000000</text></svg>
<svg x="1191" y="468" width="96" height="29" overflow="hidden"><text x="4.2" y="23" font-size="19.5" fill="#000000" font-family="Liberation Sans" textLength="32" lengthAdjust="spacingAndGlyphs">Yes</text></svg>
<svg x="1287" y="468" width="96" height="29" overflow="hidden"><text x="4.2" y="23" font-size="19.5" fill="#000000" font-family="Liberation Sans" textLength="201.0" lengthAdjust="spacingAndGlyphs">Gol 1 [Saldo Menurun]</text></svg>
<svg x="1575" y="468" width="300" height="29" overflow="hidden"><text x="4.9" y="23" font-size="19.5" fill="#000000" font-family="Liberation Sans" textLength="272" lengthAdjust="spacingAndGlyphs">Umur Aset Bulan lebih dari 12</text></svg>
<path d="M40 469 H49 L40 478 Z" fill="#0f7b0f" stroke="none" stroke-width="1.5" />
<path d="M136 469 H145 L136 478 Z" fill="#0f7b0f" stroke="none" stroke-width="1.5" />
<path d="M232 469 H241 L232 478 Z" fill="#0f7b0f" stroke="none" stroke-width="1.5" />
<path d="M328 469 H337 L328 478 Z" fill="#0f7b0f" stroke="none" stroke-width="1.5" />
<path d="M424 469 H433 L424 478 Z" fill="#0f7b0f" stroke="none" stroke-width="1.5" />
<path d="M520 469 H529 L520 478 Z" fill="#0f7b0f" stroke="none" stroke-width="1.5" />
<path d="M1000 469 H1009 L1000 478 Z" fill="#0f7b0f" stroke="none" stroke-width="1.5" />
<path d="M1096 469 H1105 L1096 478 Z" fill="#0f7b0f" stroke="none" stroke-width="1.5" />
<rect x="181" y="469" width="30" height="29" rx="0" fill="#363636" />
<path d="M196 473.5 L207 494 H185 Z" fill="#e8962a" stroke="#f5c77a" stroke-width="1" />
<rect x="195" y="479" width="2" height="9" rx="0" fill="#333333" />
<rect x="195" y="490" width="2" height="2" rx="0" fill="#333333" />
<rect x="231" y="467" width="97" height="2" rx="0" fill="#107c41" />
<rect x="324" y="493" width="4" height="4" rx="0" fill="#107c41" />
<rect x="38" y="469" width="2" height="28" rx="0" fill="#107c41" />
<rect x="230.5" y="439.5" width="99" height="59" rx="0" fill="none" stroke="#ec1c24" stroke-width="5" />
<rect x="1575.5" y="436.5" width="291" height="65" rx="0" fill="none" stroke="#ec1c24" stroke-width="5" />
<path d="M276.7 509.3 L288.8 531.3 H282.6 V555.3 H270.8 V531.3 H264.4 Z" fill="none" stroke="#ec1c24" stroke-width="4.4" stroke-linejoin="round"/>
<rect x="1892" y="411" width="26" height="519" rx="13" fill="#171717" />
<path d="M1899 428.5 L1905 419 L1911 428.5 Z" fill="#9a9a9a" stroke="#9a9a9a" stroke-width="1.5" stroke-linejoin="round"/>
<rect x="1899" y="437" width="12" height="373" rx="6" fill="#9a9a9a" />
<path d="M1899 912.5 L1905 922 L1911 912.5 Z" fill="#9a9a9a" stroke="#9a9a9a" stroke-width="1.5" stroke-linejoin="round"/>
<defs><linearGradient id="tb" x1="0" y1="0" x2="1" y2="0"><stop offset="0" stop-color="#111111"/><stop offset="0.55" stop-color="#111111"/><stop offset="0.8" stop-color="#150f10"/><stop offset="1" stop-color="#160e10"/></linearGradient></defs>
<rect x="0" y="927" width="1919" height="48" rx="0" fill="url(#tb)" />
<path d="M44 943 L37 950 L44 957" fill="none" stroke="#9a9a9a" stroke-width="1.4" />
<path d="M86 943 L93 950 L86 957" fill="none" stroke="#9a9a9a" stroke-width="1.4" />
<path d="M159 927 Q166 927 166 934 V963 Q166 969 172 969 H281 Q287 969 287 963 V934 Q287 927 294 927 Z" fill="#ffffff" stroke="none" stroke-width="1.5" />
<text x="178" y="955" font-size="19.5" fill="#262626" font-weight="400" text-anchor="start" font-family="Liberation Sans" textLength="97" lengthAdjust="spacingAndGlyphs" stroke="#262626" stroke-width="0.35">Error Data</text>
<rect x="178" y="962" width="97" height="3" rx="0" fill="#107c41" />
<rect x="293" y="937" width="1" height="28" rx="0" fill="#5a5a5a" />
<path d="M357 950 H374 M365.5 941.5 V958.5" fill="none" stroke="#e8e8e8" stroke-width="1.4" />
<rect x="1155.5" y="943.75" width="3" height="2.7" rx="0" fill="#e8e8e8" />
<rect x="1155.5" y="949.75" width="3" height="2.7" rx="0" fill="#e8e8e8" />
<rect x="1155.5" y="955.75" width="3" height="2.7" rx="0" fill="#e8e8e8" />
<rect x="1182" y="937" width="676" height="26" rx="13" fill="#171717" />
<path d="M1199 943 L1189 950 L1199 957 Z" fill="#9a9a9a" stroke="#9a9a9a" stroke-width="1" stroke-linejoin="round"/>
<rect x="1365" y="943.5" width="501" height="13" rx="6.5" fill="#9a9a9a" />
<path d="M1873 943 L1883 950 L1873 957 Z" fill="#9a9a9a" stroke="#9a9a9a" stroke-width="1" stroke-linejoin="round"/>
<rect x="0" y="975" width="1919" height="32" rx="0" fill="#161616" />
<rect x="0" y="975" width="1919" height="1" rx="0" fill="#3a3a3a" />
<text x="16.5" y="998" font-size="15.5" fill="#ffffff" font-weight="400" text-anchor="start" font-family="Liberation Sans" textLength="42" lengthAdjust="spacingAndGlyphs" >Ready</text>
<text x="115.5" y="998" font-size="15.5" fill="#ffffff" font-weight="400" text-anchor="start" font-family="Liberation Sans" textLength="168" lengthAdjust="spacingAndGlyphs" >Accessibility: Good to go</text>
<circle cx="97.5" cy="984.8" r="2.6" fill="none" stroke="#ffffff" stroke-width="1.3"/>
<path d="M91.5 988.5 Q89 987 90 985.5 Q91 984.5 93 986 Q97.5 989 102 986 Q104 984.5 105 985.5 Q106 987 103.5 988.5 L101 989.5 V994.5 M93.8 989.3 V995 Q93 998 92.5 1000 Q93 1002 95.5 1000.8" fill="none" stroke="#ffffff" stroke-width="1.3" />
<path d="M98 997.8 L102.8 1002.5 L110.5 994.5" fill="none" stroke="#ffffff" stroke-width="1.4" />
<rect x="1474" y="976" width="60" height="31" rx="0" fill="#262626" />
<path d="M1493.5 982.5 H1512.5 V1001 H1493.5 Z M1499.8 982.5 V1001 M1506.2 982.5 V1001 M1493.5 988.7 H1512.5 M1493.5 994.9 H1512.5" fill="none" stroke="#e8e8e8" stroke-width="1.4" />
<path d="M1553.5 982.5 H1575.5 V1001 H1553.5 Z M1557.5 986 H1571.5 V997.5 H1557.5 Z M1560 989.5 H1569 M1560 992.5 H1569 M1560 995 H1569" fill="none" stroke="#e8e8e8" stroke-width="1.3" />
<path d="M1613.5 982.5 H1635.5 V1001 H1613.5 Z M1617 982.5 V992 H1624 V982.5" fill="none" stroke="#e8e8e8" stroke-width="1.4" />
<path d="M1662 991.5 H1674" fill="none" stroke="#cfcfcf" stroke-width="1.3" />
<rect x="1682" y="990.5" width="148" height="2" rx="0" fill="#a9a9a9" />
<rect x="1752" y="983" width="8" height="17" rx="0" fill="#a9a9a9" />
<path d="M1837 991.5 H1850 M1843.5 985 V998" fill="none" stroke="#e8e8e8" stroke-width="1.3" />
<text x="1869" y="999" font-size="15.5" fill="#ffffff" font-weight="400" text-anchor="start" font-family="Liberation Sans" textLength="39" lengthAdjust="spacingAndGlyphs" >100%</text></svg></body></html>
